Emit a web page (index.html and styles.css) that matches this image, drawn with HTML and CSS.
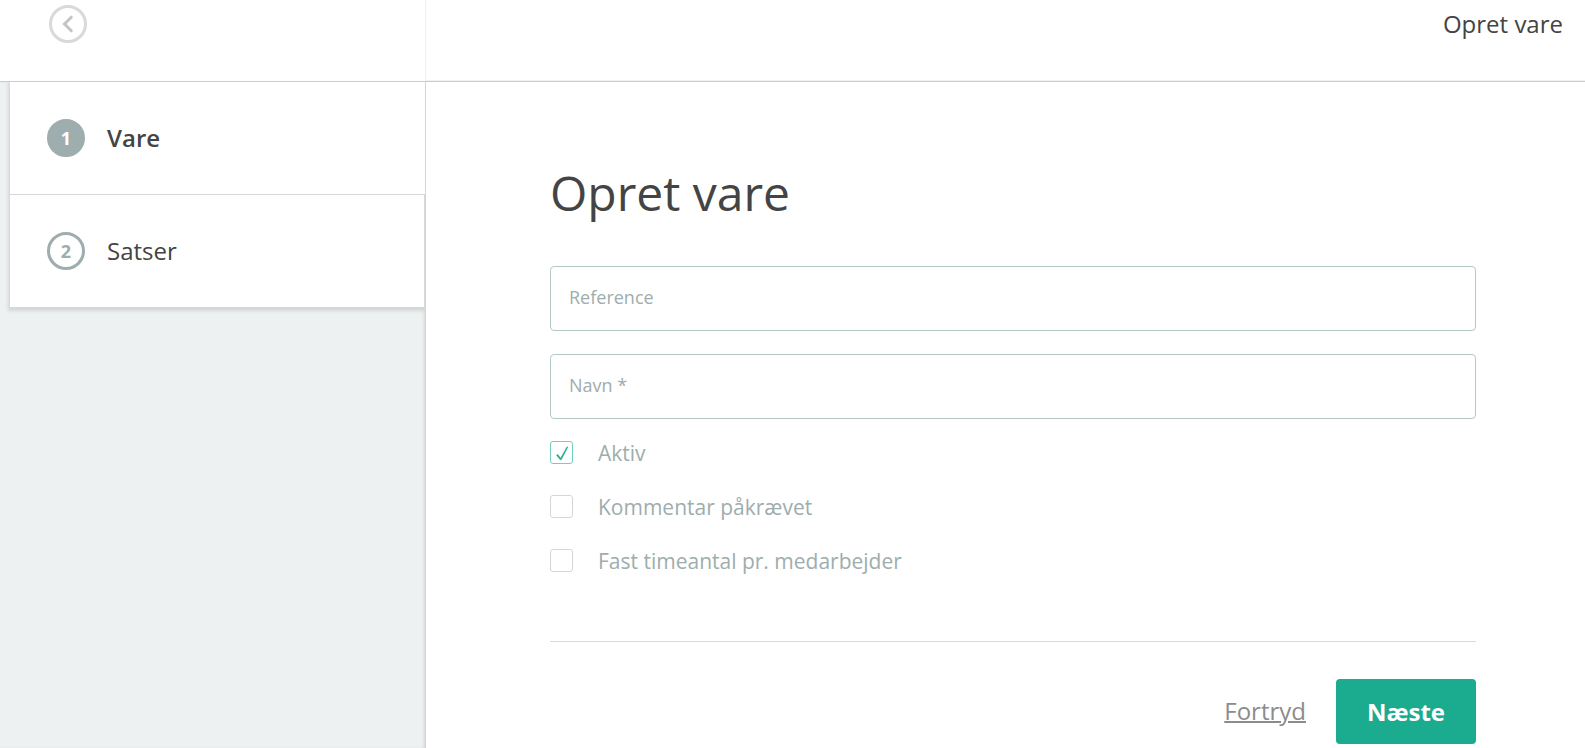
FILE: index.html
```html
<!DOCTYPE html>
<html lang="da">
<head>
<meta charset="utf-8">
<meta name="viewport" content="width=device-width, initial-scale=1">
<title>Opret vare</title>
<link rel="stylesheet" href="styles.css">
</head>
<body>
<div class="page">
  <header class="header">
    <div class="header-nav">
      <button class="back" type="button" aria-label="Tilbage">
        <svg class="back-icon" viewBox="0 0 38 38" aria-hidden="true">
          <circle cx="19" cy="19" r="17.5" fill="none" stroke="#d9d9d9" stroke-width="3"/>
          <path d="M22.3 12.2 15.5 19l6.8 6.8" fill="none" stroke="#c4c4c4" stroke-width="3" stroke-linecap="round"/>
        </svg>
      </button>
    </div>
    <div class="header-title">Opret vare</div>
  </header>
  <div class="body">
    <nav class="sidebar" aria-label="Trin">
      <ol class="steps">
        <li class="step step-active" aria-current="step"><span class="step-number">1</span><span>Vare</span></li>
        <li class="step"><span class="step-number">2</span><span>Satser</span></li>
      </ol>
    </nav>
    <main class="main">
      <form class="form">
        <h1 class="title">Opret vare</h1>
        <div class="fields">
          <input class="field" type="text" placeholder="Reference" aria-label="Reference">
          <input class="field" type="text" placeholder="Navn *" aria-label="Navn" required>
        </div>
        <div class="options">
          <label class="option"><span class="check"><input class="box" type="checkbox" checked><svg class="tick" viewBox="0 0 23 23" aria-hidden="true"><path d="M6.6 14.2 7.8 13.4 10.6 17.2 17 5.8 17.8 6.2 11.2 18.8H10.2Z" fill="#1bab8f" stroke="#1bab8f" stroke-width=".5"/></svg></span><span>Aktiv</span></label>
          <label class="option"><span class="check"><input class="box" type="checkbox"></span><span>Kommentar påkrævet</span></label>
          <label class="option"><span class="check"><input class="box" type="checkbox"></span><span>Fast timeantal pr. medarbejder</span></label>
        </div>
        <div class="actions">
          <a class="cancel" href="#">Fortryd</a>
          <button class="submit" type="submit">Næste</button>
        </div>
      </form>
    </main>
  </div>
</div>
</body>
</html>
```
FILE: styles.css
```css
* {
  box-sizing: border-box;
}

body {
  margin: 0;
  background: #fff;
  color: #444;
  font-family: "Open Sans", "Noto Sans", sans-serif;
  font-size: 24px;
  line-height: 32px;
}

.page {
  display: flex;
  flex-direction: column;
  min-height: 100vh;
}

.header {
  display: flex;
  height: 82px;
  border-bottom: 1px solid #c8cdcd;
}

.header-nav {
  width: 426px;
  padding: 5px 0 0 49px;
  border-right: 1px solid #edf1f2;
}

.header-title {
  flex: 1;
  padding: 8px 22px 0;
  border-bottom: 1px solid #edf1f2;
  text-align: right;
}

.back {
  display: block;
  padding: 0;
  border: 0;
  background: none;
  cursor: pointer;
}

.back-icon {
  display: block;
  width: 38px;
  height: 38px;
}

.body {
  display: flex;
  flex: 1;
}

.sidebar {
  width: 426px;
  padding: 0 1px 0 10px;
  overflow: hidden;
  background: #edf1f2;
  box-shadow: inset -3px 0 3px -1px #d0d4d4;
}

.steps {
  margin: 0;
  padding: 0;
  list-style: none;
  background: #fff;
  box-shadow: 0 2px 3px 2px #d4d7d7;
}

.step {
  display: flex;
  align-items: center;
  gap: 22px;
  height: 112px;
  padding-left: 37px;
  border-right: 1px solid #d6d8d8;
}

.step-active {
  height: 113px;
  border-right: 0;
  border-bottom: 1px solid #d6d8d8;
  font-weight: 600;
}

.step-number {
  display: flex;
  align-items: center;
  justify-content: center;
  width: 38px;
  height: 38px;
  border: 3px solid #9eadad;
  border-radius: 50%;
  color: #9eadad;
  font-size: 18px;
  font-weight: 700;
}

.step-active .step-number {
  background: #9eadad;
  color: #fff;
}

.main {
  flex: 1;
  padding: 79px 109px 4px 124px;
}

.title {
  margin: 0 0 41px;
  font-size: 48px;
  font-weight: 400;
  line-height: 64px;
}

.fields {
  display: grid;
  gap: 23px;
}

.field {
  width: 100%;
  height: 65px;
  padding: 0 18px 4px;
  border: 1px solid #b4c8c8;
  border-radius: 4px;
  background: #fff;
  color: #444;
  font: inherit;
  font-size: 18px;
}

.field::placeholder {
  color: #9eadad;
  opacity: 1;
}

.options {
  display: grid;
  gap: 22px;
  padding: 18px 0 64px;
  border-bottom: 1px solid #d9d9d9;
}

.option {
  display: flex;
  align-items: flex-start;
  gap: 25px;
  color: #9eadad;
  font-size: 21px;
}

.check {
  display: grid;
  width: 23px;
  height: 23px;
  margin-top: 4px;
}

.box,
.tick {
  grid-area: 1 / 1;
  width: 23px;
  height: 23px;
  margin: 0;
}

.box {
  appearance: none;
  border: 1px solid #d6d6d6;
  border-radius: 3px;
  background: #fff;
}

.box:checked {
  border-color: #6fd0be;
}

.tick {
  pointer-events: none;
}

.actions {
  display: flex;
  align-items: flex-start;
  justify-content: flex-end;
  gap: 30px;
  padding-top: 37px;
}

.cancel {
  padding-top: 16px;
  color: #8c8c8c;
  text-decoration-thickness: 2px;
}

.submit {
  width: 140px;
  height: 65px;
  padding: 0;
  border: 0;
  border-radius: 4px;
  background: #1bab8f;
  color: #fff;
  font: inherit;
  font-weight: 700;
  cursor: pointer;
}
```
